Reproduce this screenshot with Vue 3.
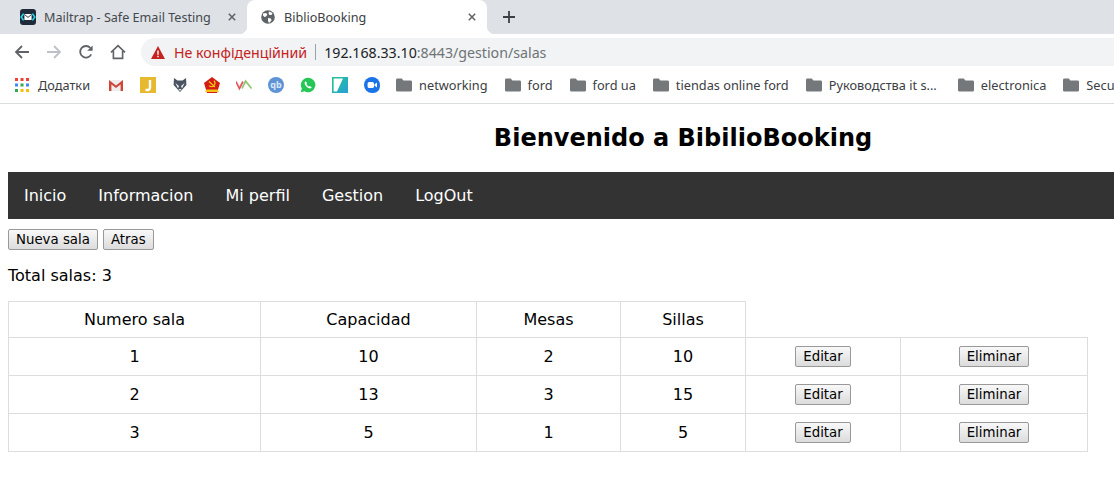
<template>
  <div class="screen">
    <!-- tab strip -->
    <div class="tabstrip">
      <div class="tab">
        <svg class="fav" viewBox="0 0 16 16">
          <rect width="16" height="16" rx="3" fill="#1f2b3a" />
          <path d="M3.6 4.6 1.2 8l2.4 3.4M12.4 4.6 14.8 8l-2.4 3.4" fill="none" stroke="#22d6e8" stroke-width="1.6" />
          <rect x="4.4" y="5" width="7.2" height="6" rx=".6" fill="#fff" />
          <path d="M4.6 5.6 8 8.4l3.4-2.8" fill="none" stroke="#1f2b3a" stroke-width=".9" />
        </svg>
        <span class="tab-title">Mailtrap - Safe Email Testing</span>
        <svg class="close" viewBox="0 0 10 10"><path d="M1 1l8 8M9 1 1 9" stroke="#5f6368" stroke-width="1.9" /></svg>
      </div>
      <div class="tab active">
        <svg class="fav globe" viewBox="0 0 16 16">
          <circle cx="8" cy="8" r="6.8" fill="#5f6368" />
          <path d="M3 4.5 6 4l1.4 1.5L6 7.5 4.5 8 3 6.5zM9 2.5l3.5 1.5-1 2H9.5L8.5 4.5zM8 9l3 .5.5 2L9 14l-1-2z" fill="#fff" />
        </svg>
        <span class="tab-title">BiblioBooking</span>
        <svg class="close" viewBox="0 0 10 10"><path d="M1 1l8 8M9 1 1 9" stroke="#5f6368" stroke-width="1.9" /></svg>
      </div>
      <svg class="plus" viewBox="0 0 12 12"><path d="M6 0v12M0 6h12" stroke="#3c4043" stroke-width="1.8" /></svg>
    </div>

    <!-- toolbar -->
    <div class="toolbar">
      <div class="nav-icons">
        <svg viewBox="0 0 16 16"><path d="M15 8H2M8 2 2 8l6 6" fill="none" stroke="#5f6368" stroke-width="1.8" /></svg>
        <svg viewBox="0 0 16 16"><path d="M1 8h13M8 2l6 6-6 6" fill="none" stroke="#bdc1c6" stroke-width="1.8" /></svg>
        <svg viewBox="0 0 16 16">
          <path d="M13.2 10.4A5.8 5.8 0 1 1 12.4 4" fill="none" stroke="#5f6368" stroke-width="1.8" />
          <path d="M14.6 1.4v5.4H9.2z" fill="#5f6368" />
        </svg>
        <svg viewBox="0 0 16 16"><path d="M1 8.4 8 1.6l7 6.8M3.4 7v7.4h9.2V7" fill="none" stroke="#5f6368" stroke-width="1.6" /></svg>
      </div>
      <div class="omnibox">
        <svg class="warn" viewBox="0 0 14 13">
          <path d="M7 0 14 13H0z" fill="#c5221f" />
          <path d="M6.3 4.4h1.4v4.4H6.3zM6.3 9.8h1.4v1.4H6.3z" fill="#fff" />
        </svg>
        <span class="insecure">Не конфіденційний</span>
        <span class="divider"></span>
        <span class="url">192.168.33.10<span class="url-rest">:8443/gestion/salas</span></span>
      </div>
    </div>

    <!-- bookmarks -->
    <div class="bookmarks">
      <svg class="apps" viewBox="0 0 14 14">
        <g v-for="(c, i) in appColors" :key="i">
          <rect :x="(i % 3) * 5.5" :y="Math.floor(i / 3) * 5.5" width="3" height="3" :fill="c" />
        </g>
      </svg>
      <span class="bm-text apps-label">Додатки</span>
      <div class="favs">
        <svg viewBox="0 0 16 16">
          <path d="M1 3h14v11H1z" fill="#eee" />
          <path d="M1 14V3l7 5.5L15 3v11h-2.4V7.4L8 11 3.4 7.4V14z" fill="#d0453a" />
        </svg>
        <svg viewBox="0 0 16 16">
          <rect width="16" height="16" fill="#e6b92f" />
          <path d="M10 3v7.5c0 2-1.4 2.8-4.5 2.4" fill="none" stroke="#fff" stroke-width="2.4" />
        </svg>
        <svg viewBox="0 0 16 16">
          <path d="M2 1l3.4 2.6h5.2L14 1l.4 7L8 15 1.6 8z" fill="#4a5361" />
          <path d="M3.4 6 7 9 6 11.4zM12.6 6 9 9l1 2.4zM6.4 12h3.2L8 14z" fill="#e8eaed" />
        </svg>
        <svg viewBox="0 0 16 16">
          <path d="M8 0 16 6l-3 10H3L0 6z" fill="#d31d12" />
          <path d="M2.5 12.5h11L15 15H1z" fill="#f0c419" />
          <path d="M5 4.4 11 10M10 3.6a3.4 3.4 0 1 1-5 5" fill="none" stroke="#f0c419" stroke-width="1.3" />
        </svg>
        <svg viewBox="0 0 16 16">
          <path d="M0 4.5l3.4 7L7 4.5" fill="none" stroke="#e4575d" stroke-width="1.7" />
          <path d="M6 11.5l3.6-7.4 6 7.4" fill="none" stroke="#8cc66d" stroke-width="1.7" />
        </svg>
        <svg viewBox="0 0 16 16">
          <circle cx="8" cy="8" r="8" fill="#5e93d6" />
          <text x="8" y="11" text-anchor="middle" class="qb">qb</text>
        </svg>
        <svg viewBox="0 0 16 16">
          <path d="M8 .8a7.2 7.2 0 0 0-6.2 10.8L.8 15.2l3.7-1A7.2 7.2 0 1 0 8 .8z" fill="#25c655" />
          <path d="M5.6 4.2 4.6 5.4c-.3 2.6 3 6 6 6l1.2-1.2-1.9-1.3-.9.7C8 9.2 6.8 8 6.4 7l.7-.9z" fill="#fff" />
        </svg>
        <svg viewBox="0 0 16 16">
          <defs>
            <linearGradient id="teal" x1="0" y1="0" x2="1" y2="1">
              <stop offset="0" stop-color="#22c58f" />
              <stop offset="1" stop-color="#2a9fd8" />
            </linearGradient>
          </defs>
          <rect width="16" height="16" fill="url(#teal)" />
          <path d="M1.6 1.6h9.4L5 14.4H1.6z" fill="#fff" />
        </svg>
        <svg viewBox="0 0 16 16">
          <path d="M8 0a8 8 0 1 0 0 16c3 0 8-.5 8-8a8 8 0 0 0-8-8z" fill="#1a73e8" />
          <rect x="3.6" y="5" width="6.4" height="6" rx="1.6" fill="#fff" />
          <path d="M10.4 7.4 13 5.6v4.8l-2.6-1.8z" fill="#fff" />
        </svg>
      </div>
      <div v-for="f in folders" :key="f" class="folder" :class="{ cut: f.endsWith('...') }">
        <svg viewBox="0 0 16 14"><path d="M0 2a1.4 1.4 0 0 1 1.4-1.4h4.4L7.4 2.4h7.2A1.4 1.4 0 0 1 16 3.8v8.4a1.4 1.4 0 0 1-1.4 1.4H1.4A1.4 1.4 0 0 1 0 12.2z" fill="#75787b" /></svg>
        <span class="bm-text">{{ f }}</span>
      </div>
    </div>

    <!-- page -->
    <div class="page">
      <h1>Bienvenido a BibilioBooking</h1>
      <ul class="menu">
        <li v-for="m in menu" :key="m">{{ m }}</li>
      </ul>
      <div class="actions">
        <button>Nueva sala</button>
        <button>Atras</button>
      </div>
      <p class="total">Total salas: {{ salas.length }}</p>
      <table>
        <colgroup>
          <col style="width: 252px" />
          <col style="width: 216px" />
          <col style="width: 144px" />
          <col style="width: 125px" />
          <col style="width: 155px" />
          <col style="width: 187px" />
        </colgroup>
        <thead>
          <tr>
            <th>Numero sala</th>
            <th>Capacidad</th>
            <th>Mesas</th>
            <th>Sillas</th>
          </tr>
        </thead>
        <tbody>
          <tr v-for="s in salas" :key="s.numero">
            <td>{{ s.numero }}</td>
            <td>{{ s.capacidad }}</td>
            <td>{{ s.mesas }}</td>
            <td>{{ s.sillas }}</td>
            <td><button>Editar</button></td>
            <td><button>Eliminar</button></td>
          </tr>
        </tbody>
      </table>
    </div>
  </div>
</template>

<script setup>
const appColors = ['#ea4335', '#ea4335', '#ea4335', '#4285f4', '#34a853', '#4285f4', '#34a853', '#fbbc05', '#fbbc05']

const folders = ['networking', 'ford', 'ford ua', 'tiendas online ford', 'Руководства it s...', 'electronica', 'Secu']

const menu = ['Inicio', 'Informacion', 'Mi perfil', 'Gestion', 'LogOut']

const salas = [
  { numero: 1, capacidad: 10, mesas: 2, sillas: 10 },
  { numero: 2, capacidad: 13, mesas: 3, sillas: 15 },
  { numero: 3, capacidad: 5, mesas: 1, sillas: 5 },
]
</script>

<style>
html,
body {
  margin: 0;
  background: #fff;
  overflow: hidden;
}
</style>

<style scoped>
.screen {
  width: 1114px;
  height: 479px;
  overflow: hidden;
  background: #fff;
}

/* browser chrome */
.tabstrip {
  height: 34px;
  background: #dee1e6;
  display: flex;
  align-items: stretch;
  padding-left: 20px;
}

.tab {
  width: 227px;
  display: flex;
  align-items: center;
  box-sizing: border-box;
  position: relative;
}

.tab.active {
  width: 240px;
  background: #fff;
  border-radius: 8px 8px 0 0;
  padding-left: 13px;
}

.tab.active::before,
.tab.active::after {
  content: '';
  position: absolute;
  bottom: 0;
  width: 8px;
  height: 8px;
}

.tab.active::before {
  left: -8px;
  background: radial-gradient(circle at 0 0, transparent 8px, #fff 8.5px);
}

.tab.active::after {
  right: -8px;
  background: radial-gradient(circle at 100% 0, transparent 8px, #fff 8.5px);
}

.fav {
  width: 16px;
  height: 16px;
  flex: none;
}

.tab-title {
  margin-left: 8px;
  flex: 1;
  font: 12.6px "Noto Sans", sans-serif;
  color: #45484d;
  white-space: nowrap;
}

.tab.active .tab-title {
  color: #3c4043;
}

.close {
  width: 8px;
  height: 8px;
  flex: none;
  margin-right: 11px;
}

.plus {
  width: 12px;
  height: 12px;
  align-self: center;
  margin-left: 16px;
}

.toolbar {
  height: 32px;
  display: flex;
  align-items: flex-end;
  background: #fff;
}

.nav-icons {
  width: 141px;
  height: 28px;
  display: flex;
  align-items: center;
  gap: 16px;
  padding-left: 14px;
  box-sizing: border-box;
  flex: none;
}

.nav-icons svg {
  width: 16px;
  height: 16px;
}

.omnibox {
  flex: 1;
  height: 28px;
  background: #f1f3f4;
  border-radius: 14px 0 0 14px;
  display: flex;
  align-items: center;
  padding-left: 10px;
  font: 14.2px "Noto Sans", sans-serif;
  white-space: nowrap;
}

.warn {
  width: 14px;
  height: 13px;
  flex: none;
}

.insecure {
  margin-left: 9px;
  color: #c5221f;
}

.divider {
  width: 1px;
  height: 16px;
  background: #9aa0a6;
  margin: 0 8px;
}

.url {
  color: #202124;
}

.url-rest {
  color: #6e7377;
}

.bookmarks {
  height: 38px;
  box-sizing: border-box;
  border-bottom: 1px solid #dadce0;
  display: flex;
  align-items: center;
  padding-left: 15px;
  white-space: nowrap;
  overflow: hidden;
}

.apps {
  width: 14px;
  height: 14px;
  flex: none;
}

.bm-text {
  font: 12.75px "Noto Sans", sans-serif;
  color: #3c4043;
}

.apps-label {
  margin-left: 9px;
}

.favs {
  display: flex;
  gap: 16px;
  margin: 0 -1px 0 18px;
  flex: none;
}

.favs svg {
  width: 16px;
  height: 16px;
}

.qb {
  font: bold 9px "Noto Sans", sans-serif;
  fill: #dbe8f8;
}

.folder {
  display: flex;
  align-items: center;
  gap: 7px;
  margin-left: 17px;
  flex: none;
}

.folder.cut {
  margin-right: 4px;
}

.folder svg {
  width: 16px;
  height: 14px;
  flex: none;
}

/* page */
.page {
  width: 1350px;
  padding: 0 8px;
  font-family: "DejaVu Sans", sans-serif;
  font-size: 16px;
  color: #000;
}

h1 {
  margin: 0;
  padding: 20px 0;
  font-size: 24px;
  line-height: 28px;
  font-weight: bold;
  text-align: center;
}

.menu {
  list-style: none;
  margin: 0;
  padding: 0;
  background: #333;
  display: flex;
}

.menu li {
  padding: 14px 16px;
  color: #fff;
  line-height: 19px;
}

.actions {
  margin-top: 10px;
  display: flex;
  gap: 5px;
}

button {
  font-family: "DejaVu Sans", sans-serif;
  font-size: 13.33px;
  line-height: 15px;
  padding: 1px 7px;
  height: 21px;
  box-sizing: border-box;
  color: #000;
  background: linear-gradient(#f8f8f8, #dcdcdc);
  border: 1px solid #999;
  border-radius: 2px;
}

.total {
  margin: 16px 0 16px;
  line-height: 19px;
}

table {
  width: 1080px;
  table-layout: fixed;
  border-collapse: collapse;
}

th,
td {
  border: 1px solid #ddd;
  text-align: center;
  font-weight: normal;
  line-height: 19px;
}

td {
  height: 38px;
  box-sizing: border-box;
  padding: 0 8px;
}

th {
  height: 36px;
  box-sizing: border-box;
  padding: 8px;
}
</style>
